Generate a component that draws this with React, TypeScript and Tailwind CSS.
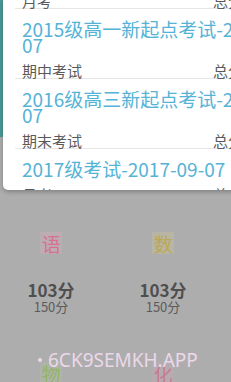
const exams = [
  { title: "2015级高一新起点考试-2017-09-07", type: "期中考试" },
  { title: "2016级高三新起点考试-2017-09-07", type: "期末考试" },
  { title: "2017级考试-2017-09-07", type: "月考" },
];

const subjects = [
  { name: "语", fg: "text-[#d86f93]", bg: "bg-[#c9adb7]/50" },
  { name: "数", fg: "text-[#bba852]", bg: "bg-[#c4bd9c]/50" },
  { name: "英", fg: "text-[#7eaed3]", bg: "bg-[#aeb6bd]/50" },
  { name: "物", fg: "text-[#93b46a]", bg: "bg-[#b2bca4]/50" },
  { name: "化", fg: "text-[#c67a93]", bg: "bg-[#bfabb2]/50" },
  { name: "生", fg: "text-[#79bea2]", bg: "bg-[#abbab4]/50" },
];

function SubRow({ type }: { type: string }) {
  return (
    <div className="flex text-[15px] leading-[14px] text-[#5a5a5a]">
      <span className="w-[191px] shrink-0">{type}</span>
      <span className="whitespace-nowrap">总分：103</span>
    </div>
  );
}

export default function App() {
  return (
    <div className="relative w-[231px] h-[382px] overflow-hidden bg-[#adadad] font-['Noto_Sans_CJK_SC',sans-serif]">
      <div className="w-[340px]">
        <div className="flex">
          <div className="w-[3px] shrink-0">
            <div className="h-[137px] bg-[#4b9797]" />
          </div>
          <div className="w-[330px] h-[190px] overflow-hidden rounded-b-[5px] bg-white shadow-[0_2px_4px_rgba(0,0,0,0.25)]">
            <div className="-mt-[6px] ml-[12px] border-b border-[#e6e6e6] pl-[7px]">
              <SubRow type="月考" />
            </div>
            {exams.map((e) => (
              <div key={e.title} className="ml-[12px] border-b border-[#e6e6e6] pl-[7px] pt-[12px]">
                <div className="w-[278px] text-[19px] leading-[16px] text-[#55b3d6]">{e.title}</div>
                <div className="mt-[11px]">
                  <SubRow type={e.type} />
                </div>
              </div>
            ))}
          </div>
        </div>

        {/* blurred subject cards behind the popup */}
        <div className="-ml-[5px] mt-[42px] grid w-[336px] grid-cols-3 gap-y-[48px]">
          {subjects.map((s) => (
            <div key={s.name} className="flex flex-col items-center">
              <div className={`flex h-[22px] w-[22px] items-center justify-center blur-[0.5px] ${s.bg}`}>
                <span className={`text-[19px] leading-[19px] ${s.fg}`}>{s.name}</span>
              </div>
              <div className="mt-[26px] text-[17px] leading-[20px] font-bold text-[#4f4f4f]">103分</div>
              <div className="text-[13px] leading-[14px] text-[#5c5c5c]">150分</div>
            </div>
          ))}
        </div>
      </div>

      {/* watermark */}
      <div className="absolute left-[38px] top-[349px] flex items-center gap-[6px] text-[19px] leading-[22px] text-[#ecd8ea] font-['Noto_Sans',sans-serif]">
        <span className="h-[4px] w-[4px] rounded-full bg-[#ecd8ea]" />
        <span>6CK9SEMKH.APP</span>
      </div>
    </div>
  );
}
